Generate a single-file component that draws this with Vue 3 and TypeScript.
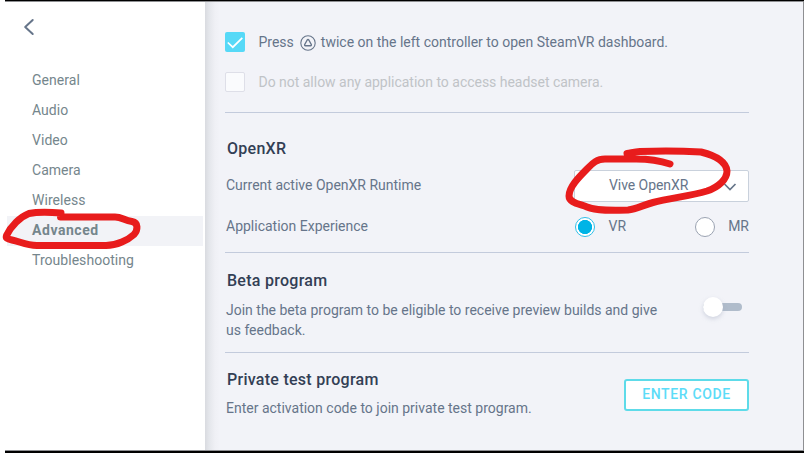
<script setup lang="ts">
import { ref } from 'vue'

const items: string[] = ['General', 'Audio', 'Video', 'Camera', 'Wireless', 'Advanced', 'Troubleshooting']
const active = ref('Advanced')
const experience = ref('VR')
const modes = ['VR', 'MR']
</script>

<template>
  <div class="window">
    <nav class="sidebar">
      <svg class="back" width="12" height="18" viewBox="0 0 12 18">
        <path d="M9.7 2 L2.2 9 L9.7 16" />
      </svg>
      <ul class="menu">
        <li
          v-for="item in items"
          :key="item"
          :class="{ active: item === active }"
          @click="active = item"
        >{{ item }}</li>
      </ul>
    </nav>

    <main class="content">
      <section class="checks">
        <div class="check-row">
          <span class="box checked">
            <svg width="20" height="20" viewBox="0 0 20 20"><path d="M2.8 10.5 L7.8 15.2 L17.3 5.8" /></svg>
          </span>
          <span>Press</span>
          <svg class="key" width="16" height="16" viewBox="0 0 16 16">
            <circle cx="8" cy="8" r="7.2" />
            <path d="M7.2 5 Q8 4 8.800 5 L11.300 9.500 Q11.600 10.600 10.600 10.700 H5.400 Q4.400 10.600 4.700 9.500 Z" />
          </svg>
          <span>twice on the left controller to open SteamVR dashboard.</span>
        </div>
        <div class="check-row disabled">
          <span class="box"></span>
          <span class="camera">Do not allow any application to access headset camera.</span>
        </div>
      </section>

      <section class="openxr">
        <h2>OpenXR</h2>
        <div class="field runtime">
          <span>Current active OpenXR Runtime</span>
          <div class="select">
            <span>Vive OpenXR</span>
            <svg width="14" height="10" viewBox="0 0 14 10"><path d="M1.5 2 L7 7.5 L12.5 2" /></svg>
          </div>
        </div>
        <div class="field experience">
          <span>Application Experience</span>
          <div class="radios">
            <label v-for="mode in modes" :key="mode" @click="experience = mode">
              <i class="radio" :class="{ on: experience === mode }"></i>
              <span>{{ mode }}</span>
            </label>
          </div>
        </div>
      </section>

      <section class="beta">
        <div>
          <h2>Beta program</h2>
          <p>Join the beta program to be eligible to receive preview builds and give<br />us feedback.</p>
        </div>
        <div class="toggle"><i></i></div>
      </section>

      <section class="private">
        <div>
          <h2>Private test program</h2>
          <p>Enter activation code to join private test program.</p>
        </div>
        <button type="button">ENTER CODE</button>
      </section>
    </main>
  </div>

  <svg class="marks" width="804" height="453" viewBox="0 0 804 453">
    <path d="M61 213 C50 212 36 212 29 213.500 C20 217 11 226 6.500 235.500 C5.500 238 7 239 12 240 C20 241.500 26 245.500 37 245.500 H106 C117 245.500 128 240 134 234.500 C138 230 138.500 222.500 132 221.500 C124 220.500 122 217 115 217 H60.500" />
    <path d="M670 164 C658 160 647 159 636 159 H605 C596 159 592 164 587 169 C579 177 569 187 569 196 C569 203 580 204 587 207 C596 211 613 210.500 628 210 C637 209 643 205 653 202.500 C670 198 690 196 707 191 C719 187 727 179 727 171 C726 161 713 155 701 152 C684 151 653 151 640 151.500 C634 152 631 153 627 153.500" />
  </svg>
</template>

<style>
body {
  background: #fff;
  overflow: hidden;
}
</style>

<style scoped>
.window {
  box-sizing: border-box;
  display: flex;
  width: 799px;
  height: 453px;
  margin-left: 5px;
  border-top: 1px solid #000;
  border-bottom: 2px solid #000;
  box-shadow: inset 0 1px #8e8f92, inset 0 -1px #8e8f92, inset -1px 0 #8e8f92;
  font: 14px/20px Roboto, "Liberation Sans", sans-serif;
  color: #66758a;
}
.sidebar {
  width: 200px;
  flex: none;
}
.back {
  display: block;
  margin: 17px 0 0 18px;
}
svg {
  flex: none;
  fill: none;
  stroke: #66758a;
}
.back path {
  stroke-width: 2;
  stroke-linecap: round;
  stroke-linejoin: round;
}
.menu {
  list-style: none;
  margin: 30px 0 0;
  padding: 0;
}
.menu li {
  height: 30px;
  line-height: 29px;
  margin: 0 2px;
  padding-left: 25px;
  letter-spacing: 0.04px;
  color: #75868c;
}
.menu li.active {
  background: #f2f3f7;
  font-weight: 700;
  letter-spacing: 0.55px;
}
.content {
  flex: 1;
  box-sizing: border-box;
  margin: 1px 1px 1px 0;
  padding: 0 54px 0 20px;
  background: linear-gradient(90deg, #d9dbe0 0, #e4e6eb 4px, #eff0f5 10px, #f2f3f8 15px);
  white-space: nowrap;
}
section {
  box-sizing: border-box;
  border-bottom: 1px solid #c3cbdc;
}
.checks {
  height: 111px;
  padding-top: 20px;
}
.check-row {
  display: flex;
  align-items: center;
  height: 40px;
}
.box {
  box-sizing: border-box;
  width: 20px;
  height: 20px;
  margin-right: 13.5px;
  border: 1px solid #dedfe8;
  border-radius: 2px;
  background: #fafbfd;
}
.box.checked {
  border: 0;
  background: #56d9f7;
}
.box svg {
  display: block;
  stroke: #fff;
  stroke-width: 1.7;
}
.key {
  margin: 1px 5.2px 0 5.8px;
}
.key circle {
  stroke-width: 1.1;
}
.key path {
  stroke-width: 1.4;
  stroke-linejoin: round;
}
.disabled {
  color: #c0c3c7;
}
.camera {
  letter-spacing: -0.02px;
}
.openxr {
  height: 140px;
  padding-top: 26px;
}
h2 {
  margin: 0 0 0 2px;
  font-size: 16px;
  line-height: 20px;
  font-weight: 500;
  letter-spacing: 0.27px;
  color: #333f55;
}
.field {
  display: flex;
  align-items: center;
  justify-content: space-between;
  padding-left: 1px;
}
.runtime {
  height: 32px;
  margin-top: 11px;
}
.runtime span {
  margin-bottom: 2px;
}
.select {
  box-sizing: border-box;
  display: flex;
  align-items: center;
  justify-content: space-between;
  width: 175px;
  height: 32px;
  padding: 0 11px 0 34px;
  border: 1px solid #c9d1dc;
  border-radius: 2px;
  background: #fff;
}
.select span {
  letter-spacing: -0.06px;
}
.select svg {
  margin-top: 2px;
  stroke-width: 1.7;
}
.experience {
  height: 30px;
  margin-top: 9px;
}
.radios {
  display: flex;
  justify-content: space-between;
  width: 174px;
}
.radios label {
  display: flex;
  align-items: center;
}
.radio {
  box-sizing: border-box;
  width: 20px;
  height: 20px;
  margin: 2px 13.5px 0 0;
  border: 1px solid #9ba3b2;
  border-radius: 50%;
  background: #fff;
}
.radio.on {
  border-color: #2fbfe9;
  background: radial-gradient(circle, #00b4e6 6.8px, #fff 7.4px);
}
.beta,
.private {
  display: flex;
  justify-content: space-between;
}
.beta {
  height: 100px;
  padding-top: 18px;
}
p {
  margin: 9px 0 0 1px;
}
.toggle {
  display: flex;
  align-items: center;
  width: 39px;
  height: 8px;
  margin: 32px 7px 0 0;
  border-radius: 4px;
  background: #b0bccb;
}
.toggle i {
  width: 20px;
  height: 20px;
  border-radius: 50%;
  background: #fff;
  box-shadow: 0 2px 4px #9da5bb66;
}
.private {
  height: 90px;
  padding-top: 17px;
  border: 0;
}
.private p {
  margin-top: 8px;
}
button {
  box-sizing: border-box;
  width: 125px;
  height: 32px;
  margin-top: 9px;
  padding: 0 0 2px;
  border: 2px solid #5edbe9;
  border-radius: 3px;
  background: #fff;
  color: #5cdcf8;
  font: 500 14px/20px Roboto, "Liberation Sans", sans-serif;
  letter-spacing: 0.65px;
}
.marks {
  position: absolute;
  top: 0;
  left: 0;
  pointer-events: none;
}
.marks path {
  stroke: #e81c1c;
  stroke-width: 7;
  stroke-linecap: round;
  stroke-linejoin: round;
}
</style>
